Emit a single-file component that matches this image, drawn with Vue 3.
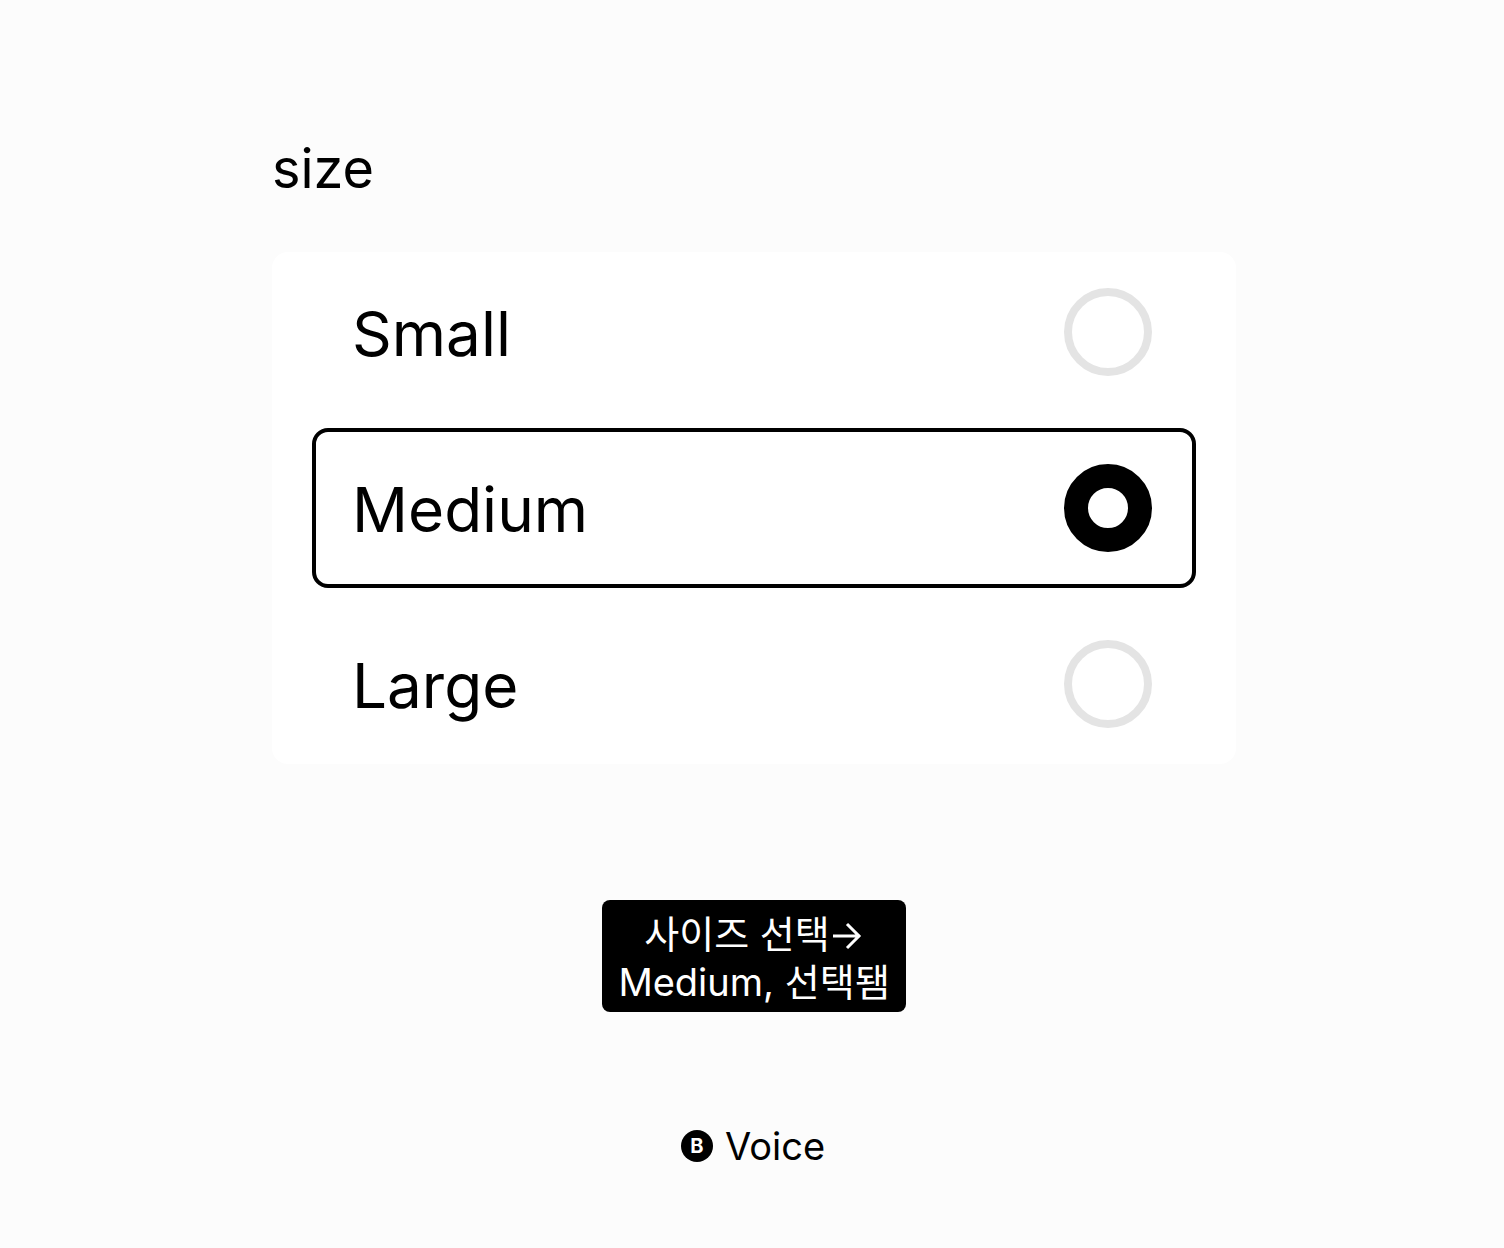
<script setup>
import { ref } from 'vue'

const sizes = ['Small', 'Medium', 'Large']
const selected = ref('Medium')
</script>

<template>
  <main class="page">
    <fieldset class="group">
      <legend class="title">size</legend>
      <div class="card">
        <label
          v-for="size in sizes"
          :key="size"
          class="option"
          :class="{ focused: selected === size }"
        >
          <span class="name">{{ size }}</span>
          <input v-model="selected" class="radio" type="radio" name="size" :value="size" />
        </label>
      </div>
    </fieldset>

    <p class="caption" role="status">
      <span>사이즈 선택<svg class="arrow" viewBox="0 0 32 28" aria-hidden="true"><path d="M1 14H28M15 2L27 14L15 26" /></svg></span>
      <span>Medium, 선택됌</span>
    </p>

    <footer class="voice"><span class="badge">B</span>Voice</footer>
  </main>
</template>

<style>
body {
  background: #fcfcfc;
}
</style>

<style scoped>
.page {
  box-sizing: border-box;
  display: flex;
  flex-direction: column;
  align-items: center;
  min-height: 100vh;
  padding: 136px 0 72px 4px;
  font-family: Inter, 'Noto Sans CJK KR', sans-serif;
  color: #000;
}

.group {
  box-sizing: border-box;
  width: 100%;
  max-width: 964px;
  min-width: 0;
  margin: 0;
  padding: 0;
  border: 0;
}

.title {
  padding: 0;
  margin-bottom: 50px;
  font-size: 54px;
  line-height: 66px;
}

.card {
  display: flex;
  flex-direction: column;
  gap: 16px;
  padding: 0 40px;
  border-radius: 16px;
  background: #fff;
}

.option {
  box-sizing: border-box;
  display: flex;
  align-items: center;
  justify-content: space-between;
  height: 160px;
  padding: 0 40px 0 36px;
  border: 4px solid transparent;
  border-radius: 16px;
  font-size: 62px;
  line-height: 80px;
}

.option.focused {
  border-color: #000;
}

.name {
  padding-top: 4px;
}

.radio {
  box-sizing: border-box;
  appearance: none;
  flex: none;
  width: 88px;
  height: 88px;
  margin: 0;
  border: 8px solid #e4e4e4;
  border-radius: 50%;
  background: #fff;
  outline: none;
}

.radio:checked {
  border: 24px solid #000;
}

.caption {
  display: flex;
  flex-direction: column;
  align-items: center;
  margin: 136px 0 0;
  padding: 10px 16px 6px;
  border-radius: 8px;
  background: #000;
  color: #fff;
  font-size: 38px;
  line-height: 48px;
}

.arrow {
  width: 32px;
  height: 28px;
  margin-left: 2px;
  vertical-align: -2px;
  fill: none;
  stroke: #fff;
  stroke-width: 3;
}

.voice {
  display: flex;
  align-items: center;
  gap: 12px;
  margin-top: 110px;
  padding-right: 2px;
  font-size: 38px;
  line-height: 48px;
}

.badge {
  width: 32px;
  height: 32px;
  border-radius: 50%;
  background: #000;
  color: #fff;
  font-size: 20px;
  font-weight: 700;
  line-height: 32px;
  text-align: center;
}
</style>
